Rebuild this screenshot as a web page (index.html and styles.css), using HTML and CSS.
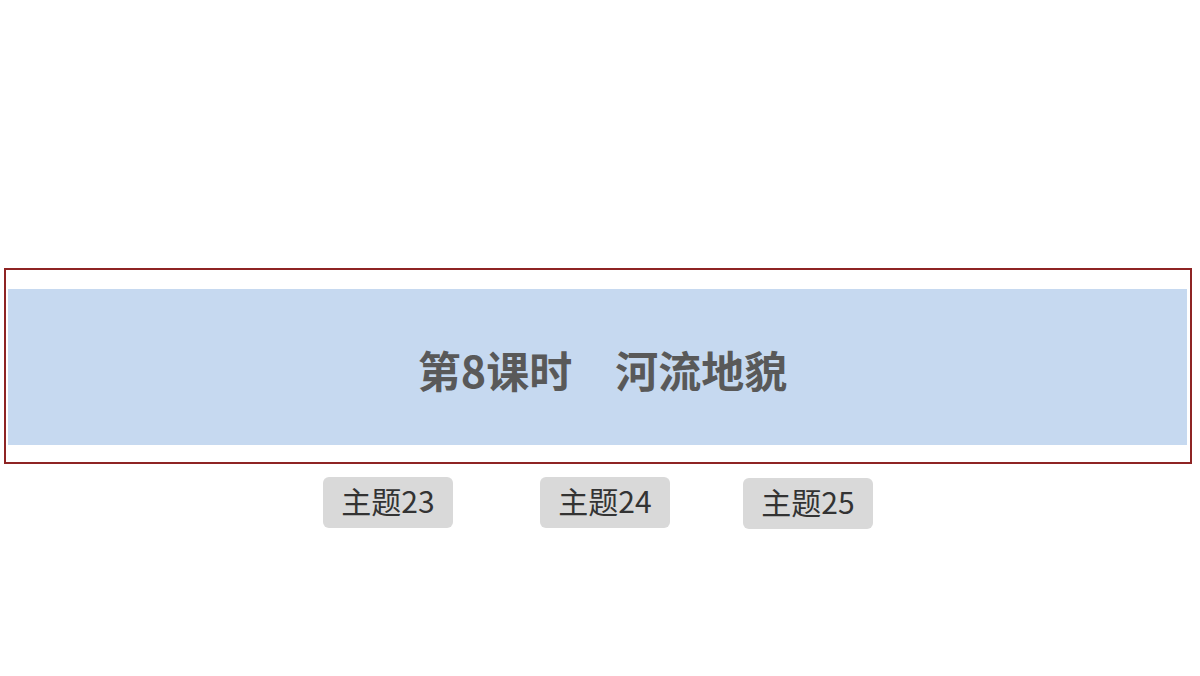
FILE: index.html
```html
<!DOCTYPE html>
<html lang="zh-CN">
<head>
    <meta charset="UTF-8">
    <meta name="viewport" content="width=device-width, initial-scale=1.0">
    <title>第8课时 河流地貌</title>
    <link rel="stylesheet" href="styles.css">
</head>
<body>
    <div class="frame">
        <div class="banner">
            <h1>第8课时　河流地貌</h1>
        </div>
    </div>

    <div class="topics">
        <button class="topic">主题23</button>
        <button class="topic">主题24</button>
        <button class="topic">主题25</button>
    </div>
</body>
</html>
```

FILE: styles.css
```css
body {
    margin: 0;
    font-family: "Noto Sans CJK SC", "Noto Sans", sans-serif;
    background: #fff;
}
.frame {
    width: 1179px;
    margin: 268px 0 0 4px;
    border: 2px solid #8e2424;
    padding: 19px 3px 17px 2px;
}
.banner {
    height: 156px;
    background-color: #c6d9f0;
    display: flex;
    align-items: center;
    justify-content: center;
}
.banner h1 {
    margin: 0;
    font-size: 43px;
    font-weight: bold;
    color: #595959;
    line-height: 1;
    padding: 4px 0 0 10px;
}
.topics {
    display: flex;
    padding-left: 323px;
    margin-top: 13px;
}
.topic {
    width: 130px;
    height: 51px;
    background-color: #d9d9d9;
    border: none;
    border-radius: 6px;
    font-family: "Noto Sans CJK SC", "Noto Sans", sans-serif;
    font-size: 30px;
    color: #333;
    padding: 0 0 6px;
}
.topic:nth-child(2) {
    margin-left: 87px;
}
.topic:nth-child(3) {
    margin-left: 73px;
    margin-top: 1px;
}
```
